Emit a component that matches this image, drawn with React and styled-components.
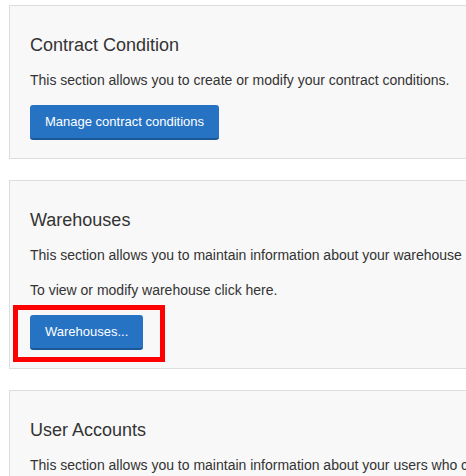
import React from "react"
import styled, { createGlobalStyle } from "styled-components"

const GlobalStyle = createGlobalStyle`
  html, body {
    margin: 0;
    padding: 0;
    background: #ffffff;
    overflow: hidden;
  }
  body {
    font-family: "Liberation Sans", Arial, Helvetica, sans-serif;
    color: #333333;
  }
`

const sections = [
  {
    id: "contract",
    title: "Contract Condition",
    lines: ["This section allows you to create or modify your contract conditions."],
    button: "Manage contract conditions",
  },
  {
    id: "warehouses",
    title: "Warehouses",
    lines: [
      "This section allows you to maintain information about your warehouse locations.",
      "To view or modify warehouse click here.",
    ],
    button: "Warehouses...",
    highlight: true,
  },
  {
    id: "users",
    title: "User Accounts",
    lines: [
      "This section allows you to maintain information about your users who can access the system.",
    ],
    button: "User Accounts...",
  },
]

const App = () => {
  return (
    <Page>
      <GlobalStyle />
      {sections.map(({ id, title, lines, button, highlight }) => (
        <Panel key={id}>
          <Title>{title}</Title>
          {lines.map(line => (
            <Text key={line}>{line}</Text>
          ))}
          <ButtonWrap $highlight={highlight}>
            <Button type="button">{button}</Button>
          </ButtonWrap>
        </Panel>
      ))}
    </Page>
  )
}

export default App

const Page = styled.div`
  padding: 5px 0 0 9px;
  width: 900px;
`

const Panel = styled.section`
  background: #f8f8f8;
  border: 1px solid #dddddd;
  padding: 19px 20px 18px 20px;
  margin-bottom: 21px;
  width: 760px;
`

const Title = styled.h3`
  margin: 10px 0 15px;
  font-size: 18px;
  line-height: 20px;
  font-weight: normal;
  color: #333333;
`

const Text = styled.p`
  margin: 0 0 15px;
  font-size: 14px;
  line-height: 20px;
  white-space: nowrap;
  color: #333333;
`

const ButtonWrap = styled.div`
  position: relative;
  display: inline-block;
  vertical-align: top;

  &::after {
    content: "";
    display: ${({ $highlight }) => ($highlight ? "block" : "none")};
    position: absolute;
    left: -17px;
    top: -10px;
    right: -22px;
    bottom: -12px;
    border: 5px solid #ff0000;
    pointer-events: none;
  }
`

const Button = styled.button`
  display: block;
  height: 35px;
  padding: 0 15px;
  background: #2673c4;
  color: #ffffff;
  font-family: "Liberation Sans", Arial, Helvetica, sans-serif;
  font-size: 13px;
  border: none;
  border-bottom: 2px solid #1b5797;
  border-radius: 3px;
  cursor: pointer;
`
